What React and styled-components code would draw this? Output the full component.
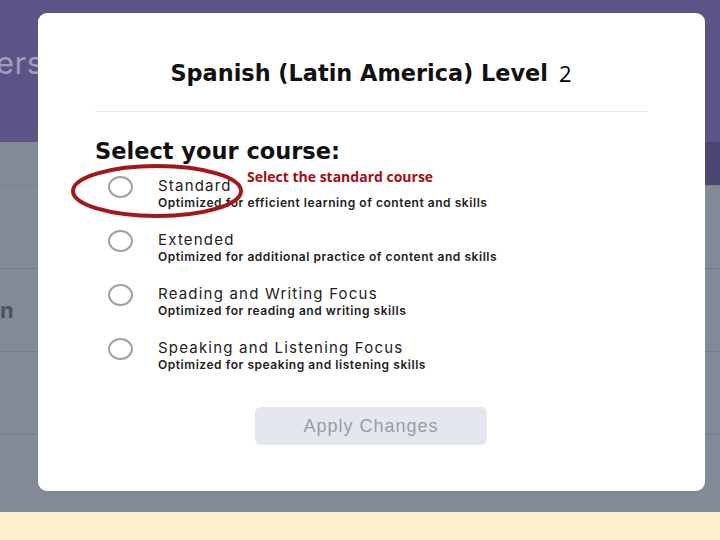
import React from "react";
import styled, { createGlobalStyle } from "styled-components";

const GlobalStyle = createGlobalStyle`
  html, body {
    margin: 0;
    padding: 0;
    width: 720px;
    height: 540px;
    overflow: hidden;
  }
  * { box-sizing: border-box; }
`;

const Page = styled.div`
  position: relative;
  width: 720px;
  height: 540px;
  display: flex;
  flex-direction: column;
  font-family: "Inter", "Noto Sans", sans-serif;
`;

const Header = styled.div`
  height: 142px;
  background: #5d5386;
  display: flex;
  align-items: center;
  padding-bottom: 18px;
  overflow: hidden;
`;

const HeaderTitle = styled.div`
  margin-left: -4px;
  font-size: 31px;
  color: #a29dbf;
  letter-spacing: 0.5px;
`;

const Body = styled.div`
  flex: 1;
  background: #838a95;
  display: flex;
  flex-direction: column;
`;

const TabStrip = styled.div`
  height: 44px;
  display: flex;
  justify-content: flex-end;
  border-bottom: 1px solid #7b828d;
`;

const DarkTab = styled.div`
  width: 240px;
  background: #4a4670;
`;

const Row = styled.div`
  height: ${({ h }) => h}px;
  border-bottom: ${({ last }) => (last ? "none" : "1px solid #757c87")};
  display: flex;
  align-items: center;
  font-weight: 700;
  font-size: 22px;
  color: #4d535c;
`;

const Footer = styled.div`
  height: 28px;
  background: #fdf0cc;
`;

const Modal = styled.div`
  position: absolute;
  left: 38px;
  top: 13px;
  width: 667px;
  height: 478px;
  background: #fff;
  border-radius: 9px;
  padding: 0 58px 0 57px;
  display: flex;
  flex-direction: column;
`;

const TitleRow = styled.div`
  height: 99px;
  display: flex;
  justify-content: center;
  align-items: center;
  padding-top: 21px;
  border-bottom: 1px solid #e6e6ea;
`;

const Title = styled.h2`
  margin: 0;
  font-family: "DejaVu Sans", sans-serif;
  font-size: 22.4px;
  font-weight: 700;
  color: #111;
`;

const Level = styled.span`
  margin-left: 11px;
  font-family: "Open Sans", sans-serif;
  font-size: 22px;
  font-weight: 400;
  color: #000;
`;

const Heading = styled.h3`
  margin: 26px 0 0;
  font-family: "DejaVu Sans", sans-serif;
  font-size: 22.5px;
  line-height: 26px;
  font-weight: 700;
  color: #111;
`;

const Options = styled.div`
  margin-top: 10px;
  display: flex;
  flex-direction: column;
  gap: 16px;
`;

const Option = styled.label`
  position: relative;
  display: flex;
  align-items: flex-start;
  height: 38px;
`;

const Radio = styled.span`
  width: 25px;
  height: 22px;
  margin: 2px 0 0 13px;
  border: 2px solid #a2a2a2;
  border-radius: 50%;
  flex-shrink: 0;
`;

const OptionText = styled.div`
  margin: 2px 0 0 25px;
  display: flex;
  flex-direction: column;
`;

const OptionName = styled.span`
  font-size: 15px;
  color: #222;
  letter-spacing: 1.2px;
  line-height: 20px;
`;

const OptionHint = styled.span`
  font-size: 12px;
  font-weight: 600;
  color: #222;
  letter-spacing: 0.55px;
  line-height: 14px;
`;

const Ellipse = styled.svg`
  position: absolute;
  left: -26px;
  top: -12px;
  pointer-events: none;
`;

const Annotation = styled.span`
  position: absolute;
  left: 152px;
  top: -7px;
  font-family: "Open Sans", sans-serif;
  font-size: 14px;
  font-weight: 700;
  color: #a50d12;
  white-space: nowrap;
`;

const Actions = styled.div`
  display: flex;
  justify-content: center;
  margin-top: 33px;
`;

const ApplyButton = styled.button`
  width: 232px;
  height: 38px;
  border: none;
  border-radius: 6px;
  background: #e4e7ee;
  color: #9a9ca3;
  font-family: "Liberation Sans", Arial, sans-serif;
  font-size: 18px;
  letter-spacing: 1px;
`;

const courses = [
  { name: "Standard", hint: "Optimized for efficient learning of content and skills", marked: true },
  { name: "Extended", hint: "Optimized for additional practice of content and skills" },
  { name: "Reading and Writing Focus", hint: "Optimized for reading and writing skills" },
  { name: "Speaking and Listening Focus", hint: "Optimized for speaking and listening skills" },
];

export default function App() {
  return (
    <>
      <GlobalStyle />
      <Page>
        <Header>
          <HeaderTitle>erse</HeaderTitle>
        </Header>
        <Body>
          <TabStrip>
            <DarkTab />
          </TabStrip>
          <Row h={83} />
          <Row h={83}>n</Row>
          <Row h={83} />
          <Row h={77} last />
        </Body>
        <Footer />
        <Modal>
          <TitleRow>
            <Title>Spanish (Latin America) Level</Title>
            <Level>2</Level>
          </TitleRow>
          <Heading>Select your course:</Heading>
          <Options>
            {courses.map((c) => (
              <Option key={c.name}>
                <Radio />
                <OptionText>
                  <OptionName>{c.name}</OptionName>
                  <OptionHint>{c.hint}</OptionHint>
                </OptionText>
                {c.marked && (
                  <>
                    <Ellipse width="176" height="58" viewBox="0 0 176 58">
                      <ellipse cx="88" cy="29" rx="84" ry="25" fill="none" stroke="#a3161a" strokeWidth="4" />
                    </Ellipse>
                    <Annotation>Select the standard course</Annotation>
                  </>
                )}
              </Option>
            ))}
          </Options>
          <Actions>
            <ApplyButton>Apply Changes</ApplyButton>
          </Actions>
        </Modal>
      </Page>
    </>
  );
}
